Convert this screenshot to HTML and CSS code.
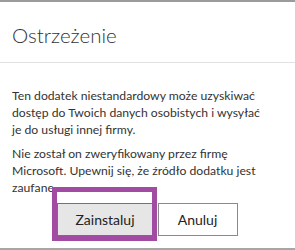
FILE: index.html
```html
<!DOCTYPE html>
<html lang="pl">
<head>
<meta charset="utf-8">
<link rel="stylesheet" href="styles.css">
</head>
<body>
<div class="dialog">
  <div class="header">
    <h1 class="title">Ostrzeżenie</h1>
  </div>
  <div class="content">
    <p class="msg">Ten dodatek niestandardowy może uzyskiwać dostęp do Twoich danych osobistych i wysyłać<br>je do usługi innej firmy.</p>
    <p class="msg">Nie został on zweryfikowany przez firmę Microsoft. Upewnij się, że źródło dodatku jest zaufane</p>
    <div class="actions">
      <button class="btn btn-primary">Zainstaluj</button>
      <button class="btn">Anuluj</button>
    </div>
  </div>
  <div class="footer-line"></div>
  <div class="highlight"></div>
</div>
</body>
</html>
```
FILE: styles.css
```css
* { box-sizing: border-box; }
html, body { margin: 0; padding: 0; background: #fff; }
body { width: 295px; height: 250px; overflow: hidden; font-family: "Lato", "Open Sans", sans-serif; color: #333; }
.dialog { position: relative; height: 250px; border-top: 2px solid #9b9b9b; }
.header { height: 61px; padding: 0 12px; border-bottom: 1px solid #e1e1e1; display: flex; align-items: flex-start; }
.title { margin: 0; padding-top: 18px; font-size: 20.5px; font-weight: 300; line-height: 30px; color: #333; }
.content { padding: 24px 12px 0 12px; }
.msg { margin: 0 0 7px 0; padding-right: 8px; font-size: 12.2px; line-height: 17px; color: #333; }
.actions { display: flex; justify-content: center; gap: 5px; margin-top: 7px; }
.btn { height: 33px; min-width: 80px; padding: 0 17px; font-family: inherit; font-size: 14px; color: #222; background: #fff; border: 1px solid #8a8a8a; border-radius: 0; }
.btn-primary { background: #e6e6e6; border-color: #1e88e5; }
.footer-line { position: absolute; left: 0; right: 0; top: 246px; height: 2px; background: #a6a6a6; }
.highlight { position: absolute; left: 52px; top: 185px; width: 105px; height: 54px; border: 5px solid #a24ba3; }
```
